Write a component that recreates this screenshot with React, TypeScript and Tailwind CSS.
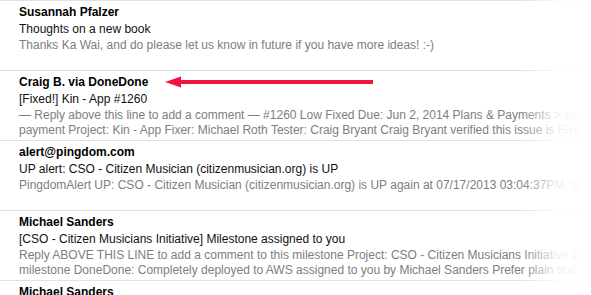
import React from 'react';

type Mail = {
  from: string;
  subject?: string;
  preview: string[];
};

const mails: Mail[] = [
  {
    from: 'Susannah Pfalzer',
    subject: 'Thoughts on a new book',
    preview: ['Thanks Ka Wai, and do please let us know in future if you have more ideas! :-)'],
  },
  {
    from: 'Craig B. via DoneDone',
    subject: '[Fixed!] Kin - App #1260',
    preview: [
      '— Reply above this line to add a comment — #1260 Low Fixed Due: Jun 2, 2014 Plans & Payments > se',
      'payment Project: Kin - App Fixer: Michael Roth Tester: Craig Bryant Craig Bryant verified this issue is Fixe',
    ],
  },
  {
    from: 'alert@pingdom.com',
    subject: 'UP alert: CSO - Citizen Musician (citizenmusician.org) is UP',
    preview: [
      'PingdomAlert UP: CSO - Citizen Musician (citizenmusician.org) is UP again at 07/17/2013 03:04:37PM, af',
    ],
  },
  {
    from: 'Michael Sanders',
    subject: '[CSO - Citizen Musicians Initiative] Milestone assigned to you',
    preview: [
      'Reply ABOVE THIS LINE to add a comment to this milestone Project: CSO - Citizen Musicians Initiative C',
      'milestone DoneDone: Completely deployed to AWS assigned to you by Michael Sanders Prefer plain text',
    ],
  },
  // last row is cut off by the window
  { from: 'Michael Sanders', preview: [] },
];

function Arrow() {
  return (
    <svg
      className="absolute left-[164px] top-[76px]"
      width="212"
      height="14"
      viewBox="0 0 212 14"
    >
      <polygon points="1,6 17,0.5 17,11.5" fill="#f0143c" />
      <rect x="15" y="4" width="194" height="4" fill="#f0143c" />
    </svg>
  );
}

export default function App() {
  return (
    <div className="relative w-[591px] h-[295px] overflow-hidden bg-white font-['Liberation_Sans',Arial,sans-serif] text-[12px]">
      {mails.map((m, i) => (
        <div key={i} className="h-[70px] shrink-0 border-t border-[#e1e1e1] pl-[19px] pt-[3px]">
          <div className="leading-[17px] font-bold text-black whitespace-nowrap">{m.from}</div>
          {m.subject && <div className="leading-[17px] text-[#111] whitespace-nowrap">{m.subject}</div>}
          {m.preview.map((p, j) => (
            <div key={j} className="leading-[15px] text-[#7e7e7e] whitespace-nowrap">
              {p}
            </div>
          ))}
        </div>
      ))}

      <Arrow />

      {/* right edge fade */}
      <div className="pointer-events-none absolute top-0 right-0 h-full w-[70px] bg-gradient-to-r from-white/0 via-white/85 to-white" />
    </div>
  );
}
